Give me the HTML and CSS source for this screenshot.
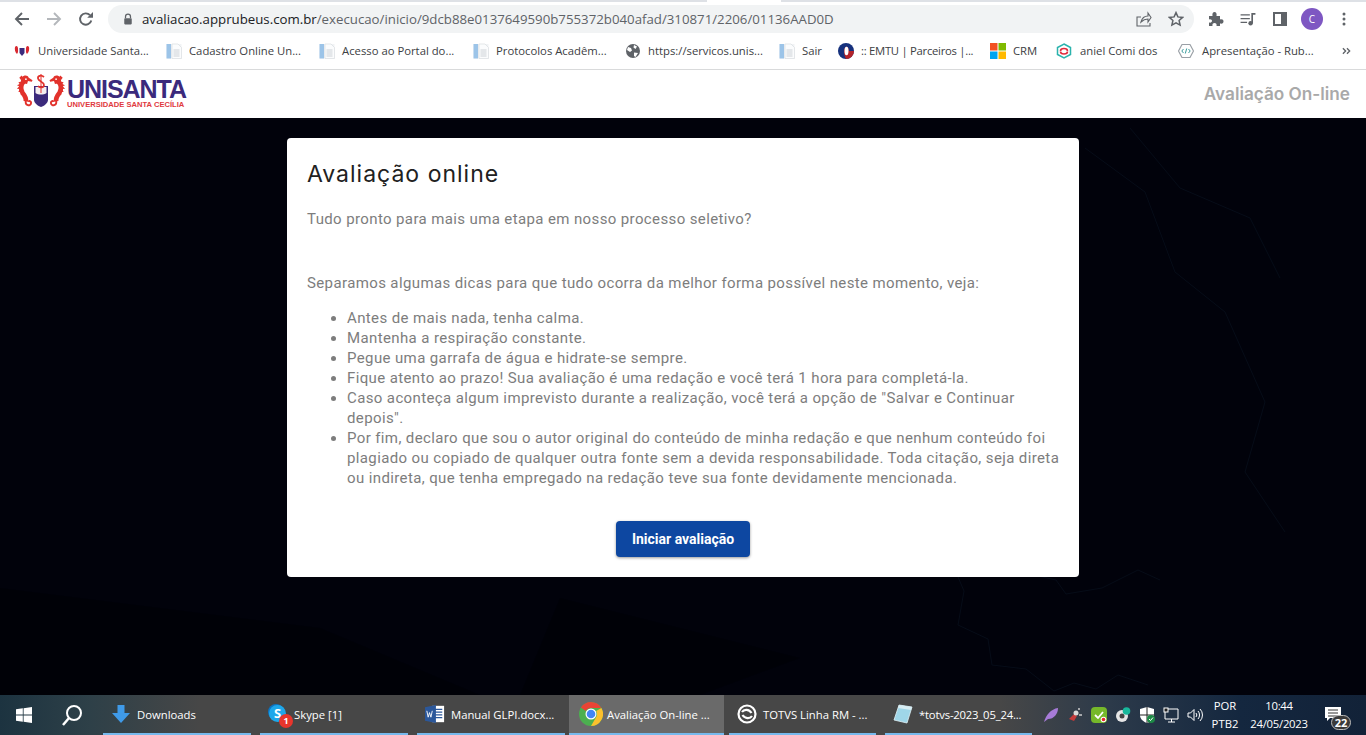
FILE: index.html
```html
<!DOCTYPE html>
<html lang="pt-BR">
<head>
<meta charset="utf-8">
<title>Avaliação On-line</title>
<link rel="stylesheet" href="styles.css">
</head>
<body>
<svg class="defs" width="0" height="0" aria-hidden="true">
  <defs>
    <symbol id="doc" viewBox="0 0 16 16">
      <rect x="0.5" y="1" width="15" height="14.5" fill="#f1f3f5"/>
      <rect x="0.5" y="1" width="4.5" height="14.5" fill="#9cc4e8"/>
      <path d="M6 1h6l3.500 3.500V15.500H6z" fill="#fbfcfd" stroke="#d4d8dc" stroke-width=".6"/>
      <path d="M7.500 7h6M7.500 9h6M7.500 11h6M7.500 13h6" stroke="#c3c8cd" stroke-width=".8"/>
    </symbol>
    <symbol id="horse" viewBox="0 0 18 34">
      <path d="M9 6C5 10 4.500 15 7 19c2.500 3 4 5 3.500 9" fill="none" stroke="#e2322c" stroke-width="5"/>
      <path d="M10.500 27c-1.500 5.500 5 7 5.500 2.500 0-2-2-2.500-2.800-1" fill="none" stroke="#e2322c" stroke-width="2"/>
      <path d="M6 2.500c2.500-2.500 6.500-2.500 7.500.5l4 2.500-.8 1.800-4-.8-1 3-5.500-1C5 7 5 4.500 6 2.500z" fill="#e2322c"/>
      <path d="M5 7L2.500 8l1.500 1.500L1 11l2.500 1L1 14.500l3 .5L2.500 18l3 0L5 21l3.500-1.500z" fill="#e2322c"/>
      <path d="M3.500 3L5.500 5.500 7 2.500 6 .5z" fill="#e2322c"/>
      <circle cx="10.500" cy="4.500" r=".9" fill="#fff"/>
    </symbol>
  </defs>
</svg>
<div class="tabstrip"><span class="tabstrip-a"></span><span class="tabstrip-b"></span></div>
<div class="toolbar">
  <svg class="nav-icon" viewBox="0 0 16 16"><path d="M15 8H2.500M8 2L2 8l6 6" fill="none" stroke="#5f6368" stroke-width="1.900"/></svg>
  <svg class="nav-icon fwd" viewBox="0 0 16 16"><path d="M1 8h12.500M8 2l6 6-6 6" fill="none" stroke="#b4b7bb" stroke-width="1.900"/></svg>
  <svg class="nav-icon reload" viewBox="0 0 16 16"><path d="M13.300 9.500A5.700 5.700 0 1 1 12 4.200" fill="none" stroke="#5f6368" stroke-width="1.900"/><path d="M9.200 6.800H15V1z" fill="#5f6368"/></svg>
  <div class="omnibox">
    <svg class="lock" viewBox="0 0 12 14"><path d="M3 6V4.200a3 3 0 0 1 6 0V6" fill="none" stroke="#5f6368" stroke-width="1.500"/><rect x="1.500" y="6" width="9" height="7.500" rx="1" fill="#5f6368"/></svg>
    <span class="url"><span class="host">avaliacao.apprubeus.com.br</span>/execucao/inicio/9dcb88e0137649590b755372b040afad/310871/2206/01136AAD0D</span>
    <svg class="omni-share" viewBox="0 0 16 16"><path d="M5 6H1v9h13v-3M5 11c1-4 4-6 7-6V2l3 4.500L12 11V8c-3 0-5 1-7 3z" fill="none" stroke="#5f6368" stroke-width="1.100"/></svg>
    <svg class="omni-star" viewBox="0 0 16 16"><path d="M8 1.600l1.900 4.300 4.700.5-3.500 3.100 1 4.600L8 11.800l-4.100 2.300 1-4.600L1.400 6.400l4.700-.5z" fill="none" stroke="#5f6368" stroke-width="1.500"/></svg>
  </div>
  <svg class="tool puzzle" viewBox="0 0 16 16"><path d="M1 5h3.500C4 2.500 5 1 6.500 1S9 2.500 8.500 5H12v3.500c2.500-.5 3.500.5 3.500 2s-1 2.500-3.500 2V15H8.500c.5-2-.5-3-2-3s-2.500 1-2 3H1v-3.500c2 .5 3-.5 3-1.500S3 8 1 8.500z" fill="#5f6368"/></svg>
  <svg class="tool media" viewBox="0 0 16 14"><path d="M0 2h10M0 6h10M0 10h7" stroke="#5f6368" stroke-width="1.300"/><path d="M12.500 11V1H16" fill="none" stroke="#5f6368" stroke-width="1.800"/><circle cx="10.800" cy="11" r="2.400" fill="#5f6368"/></svg>
  <svg class="tool panel" viewBox="0 0 14 14"><path d="M0 0h14v14H0z" fill="#5f6368"/><path d="M2 2h6v10H2z" fill="#fff"/></svg>
  <span class="avatar">C</span>
  <svg class="tool dots" viewBox="0 0 4 14"><circle cx="2" cy="2" r="1.500" fill="#5f6368"/><circle cx="2" cy="7" r="1.500" fill="#5f6368"/><circle cx="2" cy="12" r="1.500" fill="#5f6368"/></svg>
</div>
<div class="bookmarks">
  <a class="bm w152"><svg class="bm-icon" viewBox="0 0 16 16"><path d="M1 4c1.500-2 3-.5 3 1.500 0 2 .5 4-1 5.500C1 9.500.5 6 1 4zM15 4c-1.500-2-3-.5-3 1.500 0 2-.5 4 1 5.500 2-1.500 2.500-5 2-7z" fill="#d9282f"/><path d="M5.500 5h5v5l-2.500 3-2.500-3z" fill="#3b2a7c"/></svg><span>Universidade Santa...</span></a>
  <a class="bm w153"><svg class="bm-icon"><use href="#doc"/></svg><span>Cadastro Online Un...</span></a>
  <a class="bm w154"><svg class="bm-icon"><use href="#doc"/></svg><span>Acesso ao Portal do...</span></a>
  <a class="bm w152"><svg class="bm-icon"><use href="#doc"/></svg><span>Protocolos Acadêm...</span></a>
  <a class="bm w154"><svg class="bm-icon" viewBox="0 0 16 16"><circle cx="8" cy="8" r="7" fill="#5f6368"/><path d="M3 4l3 1 1 2.500-2 1.500-3-2zM9 2l3 1.500-1.500 2.500-2-1.500zM9 9.500l4 .5-2.500 4-1.500-1z" fill="#fff"/></svg><span>https://servicos.unis...</span></a>
  <a class="bm w59"><svg class="bm-icon"><use href="#doc"/></svg><span>Sair</span></a>
  <a class="bm w152 tight"><svg class="bm-icon" viewBox="0 0 16 16"><circle cx="8" cy="8" r="8" fill="#16317d"/><path d="M8 16a8 8 0 0 0 8-8H11c0-2-.8-4-2.500-4.500C6.500 4 6 6.500 6 8.500s.500 5 2 7.500z" fill="#b3232a"/><ellipse cx="8.500" cy="8" rx="2" ry="4.200" fill="#fff"/></svg><span>:: EMTU | Parceiros |...</span></a>
  <a class="bm w66"><svg class="bm-icon" viewBox="0 0 16 16"><path d="M0 0h7.500v7.500H0z" fill="#f25022"/><path d="M8.500 0H16v7.500H8.500z" fill="#7fba00"/><path d="M0 8.500h7.500V16H0z" fill="#00a4ef"/><path d="M8.500 8.500H16V16H8.500z" fill="#ffb900"/></svg><span>CRM</span></a>
  <a class="bm w122 wide"><svg class="bm-icon" viewBox="0 0 16 16"><path d="M8 1l6.500 3.500v7L8 15l-6.500-3.500v-7z" fill="#fff" stroke="#2bb3ad" stroke-width="1.500"/><path d="M4.500 8a3.500 2.500 0 0 1 7 0M11.500 8.500a3.500 2.500 0 0 1-7 0" fill="none" stroke="#e32b3c" stroke-width="1.600"/></svg><span>aniel Comi dos</span></a>
  <a class="bm w146 wide"><svg class="bm-icon" viewBox="0 0 16 16"><path d="M4 1.500h8L15.500 8 12 14.500H4L.5 8z" fill="#fff" stroke="#9aa0a6" stroke-width="1.200" stroke-linejoin="round"/><path d="M5.500 6L3.800 8l1.700 2M10.500 6l1.700 2-1.700 2" fill="none" stroke="#3a9c9c" stroke-width="1"/><path d="M8.700 5.500l-1.400 5" stroke="#3a9c9c" stroke-width="1"/></svg><span>Apresentação - Rub...</span></a>
  <svg class="bm-more" viewBox="0 0 10 8"><path d="M1 1l3 3-3 3M5.500 1l3 3-3 3" fill="none" stroke="#5f6368" stroke-width="1.500"/></svg>
</div>
<header class="app-header">
  <div class="logo">
    <div class="logo-mark">
      <svg class="horse" viewBox="0 0 18 34"><use href="#horse"/></svg>
      <svg class="crest" viewBox="0 0 16 34">
        <path d="M1 12h14v14c0 3-4 6-7 7-3-1-7-4-7-7z" fill="#3b2a7c"/>
        <path d="M2.500 13h11v6c-3 2-8 2-11 0z" fill="#f4eef0"/>
        <path d="M11 3C8 .5 4.500 2 5 4.500c.5 3 6 3 6 6.500 0 3-4.500 3-6 1" fill="none" stroke="#e2322c" stroke-width="1.700"/>
        <path d="M8 0v19" stroke="#e2322c" stroke-width="1"/>
      </svg>
      <svg class="horse flip" viewBox="0 0 18 34"><use href="#horse"/></svg>
    </div>
    <div class="logo-text">
      <span class="logo-name">UNISANTA</span>
      <span class="logo-sub">UNIVERSIDADE SANTA CECÍLIA</span>
    </div>
  </div>
  <span class="app-title">Avaliação On-line</span>
</header>
<main class="stage">
  <svg class="stage-art" viewBox="0 0 1366 577" aria-hidden="true">
    <g fill="none" stroke="#060c18" stroke-width="1">
      <path d="M952 445l12 28-6 34 30 14 4 26 34 4 28 22 20-8 22 6 22-14 30 10M1000 410l24 22-4 22 36 8 10 14 36-6 36-18 22 10"/>
      <path d="M1085 30l60 44 30 80 50 40 40 90-20 70 40 60M1130 10l50 60 70 30 30 60"/>
    </g>
    <g fill="#000" opacity=".3">
      <path d="M0 470l320 40 160 67H0zM560 480l240 60-100 37H520z"/>
    </g>
  </svg>
  <section class="card">
    <h1 class="card-title">Avaliação online</h1>
    <p class="lead">Tudo pronto para mais uma etapa em nosso processo seletivo?</p>
    <p class="intro">Separamos algumas dicas para que tudo ocorra da melhor forma possível neste momento, veja:</p>
    <ul class="tips">
      <li>Antes de mais nada, tenha calma.</li>
      <li>Mantenha a respiração constante.</li>
      <li>Pegue uma garrafa de água e hidrate-se sempre.</li>
      <li>Fique atento ao prazo! Sua avaliação é uma redação e você terá 1 hora para completá-la.</li>
      <li>Caso aconteça algum imprevisto durante a realização, você terá a opção de "Salvar e Continuar depois".</li>
      <li>Por fim, declaro que sou o autor original do conteúdo de minha redação e que nenhum conteúdo foi plagiado ou copiado de qualquer outra fonte sem a devida responsabilidade. Toda citação, seja direta ou indireta, que tenha empregado na redação teve sua fonte devidamente mencionada.</li>
    </ul>
    <div class="actions"><button class="start" type="button">Iniciar avaliação</button></div>
  </section>
</main>
<footer class="taskbar">
  <svg class="win" viewBox="0 0 16 16"><path d="M0 2.300l6.800-1v6.300H0zM7.600 1.200L16 0v7.600H7.600zM0 8.400h6.800v6.300l-6.800-1zM7.600 8.400H16V16l-8.400-1.200z" fill="#fff"/></svg>
  <svg class="search" viewBox="0 0 22 22"><circle cx="13" cy="9" r="7" fill="none" stroke="#fff" stroke-width="2"/><path d="M8 14l-6 7" stroke="#fff" stroke-width="2.500"/></svg>
  <div class="task t-downloads"><svg class="task-icon" viewBox="0 0 20 20"><path d="M6.500 1h7v8H19l-9 10L1 9h5.500z" fill="#3f9ae8"/></svg><span>Downloads</span></div>
  <div class="task t-skype"><span class="skype"><span class="skype-back"></span><span class="skype-s">S</span><span class="skype-badge">1</span></span><span>Skype [1]</span></div>
  <div class="task t-word"><svg class="task-icon" viewBox="0 0 22 20"><rect x="8" y="1" width="13" height="18" fill="#fff"/><path d="M11 5h8M11 8h8M11 11h8M11 14h8" stroke="#2b579a" stroke-width="1.300"/><path d="M0 2.500L12 0v20L0 17.500z" fill="#2b579a"/><path d="M2 6.500l1.500 7 1.500-5 1.500 5 1.500-7" fill="none" stroke="#fff" stroke-width="1"/></svg><span>Manual GLPI.docx...</span></div>
  <div class="task t-chrome active"><svg class="task-icon chrome" viewBox="0 0 24 24"><circle cx="12" cy="12" r="12" fill="#4caf50"/><path d="M12 0a12 12 0 0 1 10.400 6H12a6 6 0 0 0-5.200 3L1.900 5.500A12 12 0 0 1 12 0z" fill="#ea4335"/><path d="M22.400 6A12 12 0 0 1 12 24l5.200-9a6 6 0 0 0 0-6z" fill="#fbc02d"/><circle cx="12" cy="12" r="5.500" fill="#fff"/><circle cx="12" cy="12" r="4.300" fill="#4285f4"/></svg><span>Avaliação On-line ...</span></div>
  <div class="task t-totvs"><svg class="task-icon" viewBox="0 0 20 20"><circle cx="10" cy="10" r="8.500" fill="none" stroke="#fff" stroke-width="2.200"/><path d="M5 8c2-3 7-3 9.500 1M15 12c-2 3-7 3-9.500-1" fill="none" stroke="#fff" stroke-width="2.200"/></svg><span>TOTVS Linha RM - ...</span></div>
  <div class="task t-notes"><svg class="task-icon" viewBox="0 0 20 20"><path d="M6 1l13 2-5 16L1 16z" fill="#9fd6e8" stroke="#dff1f6" stroke-width=".8"/><path d="M6 1l13 2-1 3L5 4z" fill="#d8eef4"/></svg><span>*totvs-2023_05_24...</span></div>
  <div class="tray">
    <svg class="tray-icon" viewBox="0 0 16 16"><path d="M1 15C3 8 8 2 15 1c0 6-4 11-10 11z" fill="#a77bd8"/></svg>
    <svg class="tray-icon" viewBox="0 0 16 16"><path d="M2 12l5-5 3 2-3 5z" fill="#c43a3a"/><circle cx="9" cy="6" r="2.500" fill="#d9d9d9"/><path d="M11 2h2M12 8h3" stroke="#ccc" stroke-width="1.500"/></svg>
    <svg class="tray-icon" viewBox="0 0 16 16"><rect width="16" height="16" rx="4" fill="#76b82a"/><path d="M4 8l3 3 5-6" fill="none" stroke="#fff" stroke-width="1.800"/><circle cx="12.500" cy="12.500" r="2.800" fill="#fff"/><circle cx="12.500" cy="12.500" r="1.800" fill="#e8262a"/></svg>
    <svg class="tray-icon" viewBox="0 0 16 16"><circle cx="7" cy="9" r="6" fill="#e6e6e6"/><circle cx="7" cy="9" r="2.500" fill="#444"/><circle cx="11.500" cy="4" r="3.800" fill="#18b89b"/></svg>
    <svg class="tray-icon" viewBox="0 0 16 16"><path d="M8 0l7 2v6c0 4-3 6.500-7 8-4-1.500-7-4-7-8V2z" fill="#fff"/><path d="M8 0v16M1 8h14" stroke="#222" stroke-width="1"/><circle cx="12" cy="12" r="4" fill="#1d8a46"/><path d="M10 12l1.500 1.500 2.500-3" fill="none" stroke="#fff" stroke-width="1"/></svg>
    <svg class="tray-icon" viewBox="0 0 16 16"><path d="M4 2h11v10H2V5M5 15h7M8.500 12v3" fill="none" stroke="#fff" stroke-width="1"/><rect x="1" y="1" width="4" height="4" fill="#222" stroke="#fff" stroke-width="1"/></svg>
    <svg class="tray-icon" viewBox="0 0 16 16"><path d="M1 6h2.500L7 2.500v11L3.500 10H1z" fill="none" stroke="#fff" stroke-width="1"/><path d="M9 6a3 3 0 0 1 0 4M11 4a6 6 0 0 1 0 8M13 2a8.500 8.500 0 0 1 0 12" fill="none" stroke="#fff" stroke-width="1"/></svg>
    <div class="lang"><span>POR</span><span>PTB2</span></div>
    <div class="clock"><span>10:44</span><span>24/05/2023</span></div>
    <div class="notify">
      <svg class="notify-icon" viewBox="0 0 16 14"><path d="M0 0h16v11H5l-3 3v-3H0z" fill="#fff"/><path d="M3 3h10M3 6h10M3 9h10" stroke="#333" stroke-width="1"/></svg>
      <span class="notify-count">22</span>
    </div>
  </div>
</footer>
</body>
</html>
```

FILE: styles.css
```css
* { box-sizing: border-box; }
html, body { margin: 0; height: 735px; overflow: hidden; }
body { display: flex; flex-direction: column; background: #fff; font-family: "Roboto", "Liberation Sans", sans-serif; }
.defs { position: absolute; }

.tabstrip { flex: none; height: 2px; display: flex; background: #dee1e6; }
.tabstrip-a { width: 707px; }
.tabstrip-b { width: 74px; background: #fff; }

.toolbar { flex: none; height: 34px; display: flex; align-items: center; background: #fff; padding-left: 14px; }
.nav-icon { width: 16px; height: 16px; flex: none; }
.fwd { margin-left: 16px; }
.reload { margin-left: 16px; }
.omnibox { flex: none; margin-left: 14px; width: 1086px; height: 28px; background: #f1f3f4; border-radius: 14px; display: flex; align-items: center; padding-left: 15px; }
.lock { width: 10px; height: 12px; flex: none; }
.url { margin-left: 9px; font: 13.260px "Open Sans", "Liberation Sans", sans-serif; color: #5f6368; white-space: nowrap; flex: 1; }
.host { color: #202124; }
.omni-share { width: 16px; height: 16px; flex: none; margin-right: 16px; }
.omni-star { width: 16px; height: 16px; flex: none; margin-right: 10px; }
.tool { flex: none; }
.puzzle { width: 16px; height: 16px; margin-left: 14px; }
.media { width: 16px; height: 13px; margin-left: 16px; }
.panel { width: 14px; height: 14px; margin-left: 17px; }
.avatar { flex: none; margin-left: 14px; width: 22px; height: 22px; border-radius: 50%; background: #7e57c2; color: #fff; font: 10px/22px "Open Sans", sans-serif; text-align: center; }
.dots { width: 4px; height: 14px; margin-left: 19px; }

.bookmarks { flex: none; height: 34px; display: flex; align-items: center; padding: 0 0 4px 14px; background: #fff; border-bottom: 1px solid #d9dadb; }
.bm { flex: none; display: flex; align-items: center; gap: 7px; font: 11.300px "Open Sans", "Liberation Sans", sans-serif; color: #3c4043; white-space: nowrap; overflow: hidden; }
.bm:first-child, .wide { gap: 8px; }
.tight { letter-spacing: -0.28px; }
.bm-icon { width: 16px; height: 16px; flex: none; }
.w152 { width: 152px; }
.w153 { width: 153px; }
.w154 { width: 154px; }
.w59 { width: 59px; }
.w66 { width: 66px; }
.w122 { width: 122px; }
.w146 { width: 164px; }
.bm-more { width: 9px; height: 8px; flex: none; }

.app-header { flex: none; height: 48px; display: flex; align-items: center; justify-content: space-between; padding: 0 16px 2px; background: #fff; }
.logo { display: flex; align-items: center; gap: 1px; }
.logo-mark { display: flex; width: 50px; height: 34px; flex: none; margin-top: -4px; }
.horse { width: 17px; height: 34px; flex: none; }
.flip { transform: scaleX(-1); }
.crest { width: 16px; height: 34px; flex: none; }
.logo-text { display: flex; flex-direction: column; margin-top: 2px; }
.logo-name { font: 700 25px/21px "Liberation Sans", sans-serif; letter-spacing: -1.050px; color: #3b2a7c; }
.logo-sub { font: 700 7.600px/9px "Liberation Sans", sans-serif; color: #e0393e; }
.app-title { font: 600 17.200px "Inter", sans-serif; color: #a9a9a9; }

.stage { flex: 1; min-height: 0; position: relative; background: #01020b; padding-top: 20px; display: flex; flex-direction: column; align-items: center; }
.stage-art { position: absolute; inset: 0; width: 100%; height: 100%; }
.card { position: relative; width: 792px; height: 439px; background: #fff; border-radius: 4px; padding: 20px 16px 20px 20px; color: #7d7d7d; font-size: 15px; line-height: 20px; letter-spacing: 0.38px; }
.card-title { margin: 0; font: 400 23px/32px "Inter", sans-serif; letter-spacing: 1px; color: #212121; }
.lead { margin: 19px 0 0; }
.intro { margin: 44px 0 0; }
.tips { margin: 15px 0 0; padding-left: 40px; }
.actions { display: flex; justify-content: center; margin: 33px 4px 0 0; }
.start { width: 134px; height: 36px; border: 0; border-radius: 4px; background: #0d47a1; color: #fff; font: 700 14px "Roboto", sans-serif; box-shadow: 0 1px 3px rgba(0,0,0,.4); }

.taskbar { flex: none; height: 40px; display: flex; align-items: stretch; color: #fff; background: linear-gradient(90deg, #1c3340 0, #2e4048 90px, #474747 200px, #474747 1000px, #2c3a4a 1110px, #14273f 1240px, #122238 100%); font: 11.300px "Open Sans", "Liberation Sans", sans-serif; }
.win { width: 16px; height: 16px; flex: none; align-self: center; margin-left: 16px; }
.search { width: 22px; height: 22px; flex: none; align-self: center; margin-left: 29px; margin-right: 20px; }
.task { flex: none; display: flex; align-items: center; gap: 6px; height: 40px; padding-left: 8px; border-bottom: 2px solid #76b9ed; margin-right: 9px; white-space: nowrap; }
.task-icon { width: 20px; height: 20px; flex: none; }
.t-downloads, .t-skype, .t-word { width: 148px; }
.t-word { margin-right: 4px; }
.t-chrome { width: 155px; background: #6a6a6a; padding-left: 10px; margin-right: 5px; gap: 4px; }
.chrome { width: 24px; height: 24px; }
.t-totvs { width: 147px; }
.t-notes { width: 147px; margin-right: 0; letter-spacing: -0.2px; }
.skype { position: relative; width: 20px; height: 24px; flex: none; }
.skype-back { position: absolute; left: 0; top: 2px; width: 16px; height: 16px; border-radius: 50%; background: #0b74c4; }
.skype-s { position: absolute; left: 1px; top: 3px; width: 17px; height: 17px; border-radius: 50%; background: #1ea7ea; color: #fff; font: 700 13px/17px "Open Sans", sans-serif; text-align: center; }
.skype-badge { position: absolute; left: 11px; top: 12px; width: 14px; height: 14px; border-radius: 50%; background: #e8352c; color: #fff; font: 700 9px/14px "Open Sans", sans-serif; text-align: center; }
.tray { flex: 1; display: flex; align-items: center; padding-left: 11px; }
.tray-icon { width: 16px; height: 16px; flex: none; margin-right: 8px; }
.lang, .clock { display: flex; flex-direction: column; align-items: center; line-height: 18px; }
.lang { width: 28px; }
.clock { margin-left: 10px; width: 60px; letter-spacing: -0.25px; }
.notify { position: relative; margin-left: 16px; width: 26px; height: 28px; }
.notify-icon { position: absolute; left: 0; top: 6px; width: 16px; height: 14px; }
.notify-count { position: absolute; left: 6px; top: 14px; width: 20px; height: 15px; border-radius: 8px; background: #3a3a3a; border: 1px solid #bbb; font: 700 11px/13px "Open Sans", sans-serif; text-align: center; }
```
